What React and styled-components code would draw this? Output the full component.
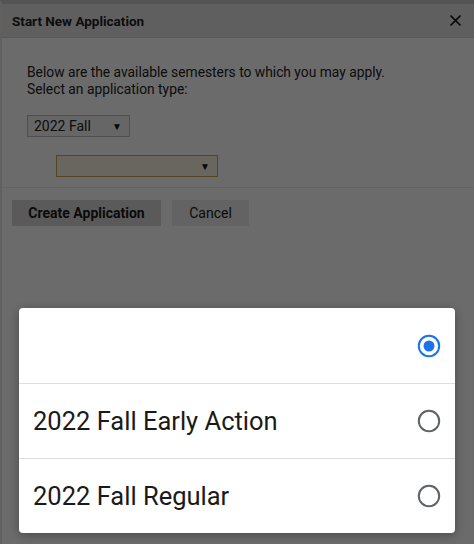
import React from 'react';
import styled, { createGlobalStyle } from 'styled-components';

const GlobalStyle = createGlobalStyle`
  html, body {
    margin: 0;
    padding: 0;
    height: 100%;
    background: #ffffff;
  }
  #root {
    height: 100%;
  }
  * {
    box-sizing: border-box;
  }
`;

const Screen = styled.div`
  position: relative;
  width: 474px;
  height: 544px;
  overflow: hidden;
  font-family: Roboto, "Noto Sans", sans-serif;
`;

const Dialog = styled.div`
  height: 100%;
  border-top: 4px solid #c8c8c8;
  border-left: 2px solid #e4e4e4;
  background: #ffffff;
`;

const Header = styled.div`
  display: flex;
  align-items: center;
  justify-content: space-between;
  height: 34px;
  padding: 0 12px 0 10px;
  background: #e3e3e3;
  border-bottom: 1px solid #d4d4d4;
`;

const Title = styled.h1`
  margin: 0;
  font-size: 13.5px;
  font-weight: 700;
  color: #222;
`;

const CloseButton = styled.button`
  display: flex;
  padding: 0;
  border: none;
  background: none;
  color: #111;
`;

const Body = styled.div`
  padding: 26px 25px 10px;
  border-bottom: 1px solid #ececec;
`;

const Intro = styled.p`
  margin: 0 0 17px;
  font-size: 13.8px;
  line-height: 17px;
  color: #222;
`;

const SelectBox = styled.div`
  display: flex;
  align-items: center;
  justify-content: space-between;
  width: ${(p) => p.width}px;
  height: 22px;
  margin-left: ${(p) => p.indent || 0}px;
  margin-bottom: ${(p) => p.gap || 0}px;
  padding: 0 7px 0 6px;
  border: 1px solid ${(p) => (p.focused ? '#c6a64a' : '#bcbcbc')};
  background: ${(p) => (p.focused ? '#f7f3e3' : '#f4f4f4')};
  font-size: 14px;
  color: #222;
`;

const Caret = styled.span`
  font-size: 10px;
  color: #111;
`;

const Actions = styled.div`
  display: flex;
  gap: 11px;
  padding: 12px 10px;
`;

const Button = styled.button`
  height: 26px;
  padding: 0;
  border: none;
  background: ${(p) => (p.primary ? '#d6d6d6' : '#ebebeb')};
  font-family: Roboto, "Noto Sans", sans-serif;
  font-size: 14px;
  font-weight: ${(p) => (p.primary ? 700 : 400)};
  color: #1a1a1a;
  width: ${(p) => p.width}px;
`;

const Overlay = styled.div`
  position: absolute;
  inset: 0;
  background: rgba(0, 0, 0, 0.58);
`;

const Sheet = styled.div`
  position: absolute;
  left: 19px;
  right: 19px;
  bottom: 11px;
  background: #ffffff;
  border-radius: 4px;
  box-shadow: 0 2px 10px rgba(0, 0, 0, 0.3);
  overflow: hidden;
`;

const Option = styled.div`
  display: flex;
  align-items: center;
  justify-content: space-between;
  height: 75px;
  padding: 0 14px 0 14px;
  border-top: ${(p) => (p.first ? 'none' : '1px solid #dedede')};
  font-family: Roboto, "Noto Sans", sans-serif;
  font-size: 25.5px;
  color: #1a1a1a;
`;

const Radio = ({ checked }) => (
  <svg width="24" height="24" viewBox="0 0 24 24">
    <circle
      cx="12"
      cy="12"
      r="10.2"
      fill="none"
      stroke={checked ? '#1a73e8' : '#5f6368'}
      strokeWidth="2"
    />
    {checked && <circle cx="12" cy="12" r="5.5" fill="#1a73e8" />}
  </svg>
);

const options = [
  { label: '', checked: true },
  { label: '2022 Fall Early Action', checked: false },
  { label: '2022 Fall Regular', checked: false },
];

function App() {
  return (
    <Screen>
      <GlobalStyle />
      <Dialog>
        <Header>
          <Title>Start New Application</Title>
          <CloseButton>
            <svg width="13" height="13" viewBox="0 0 13 13">
              <path d="M1.5 1.5 L11.5 11.5 M11.5 1.5 L1.5 11.5" stroke="#111" strokeWidth="1.7" />
            </svg>
          </CloseButton>
        </Header>
        <Body>
          <Intro>
            Below are the available semesters to which you may apply.
            <br />
            Select an application type:
          </Intro>
          <SelectBox width={103} gap={18}>
            2022 Fall <Caret>▼</Caret>
          </SelectBox>
          <SelectBox width={162} indent={29} focused>
            <span />
            <Caret>▼</Caret>
          </SelectBox>
        </Body>
        <Actions>
          <Button primary width={149}>Create Application</Button>
          <Button width={77}>Cancel</Button>
        </Actions>
      </Dialog>
      <Overlay />
      <Sheet>
        {options.map((o, i) => (
          <Option key={i} first={i === 0}>
            <span>{o.label}</span>
            <Radio checked={o.checked} />
          </Option>
        ))}
      </Sheet>
    </Screen>
  );
}

export default App;
